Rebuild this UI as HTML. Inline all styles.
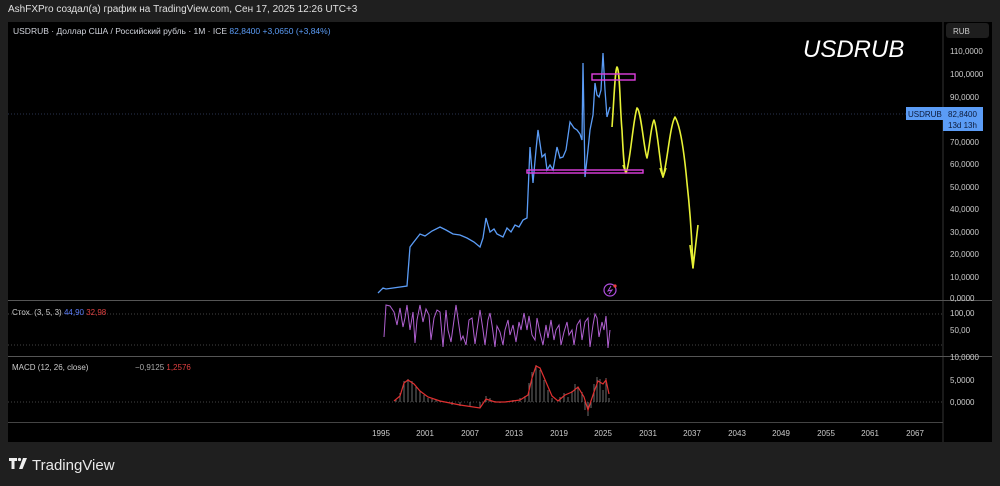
<!DOCTYPE html>
<html><head><meta charset="utf-8"><style>
body{margin:0;width:1000px;height:486px;background:#1f1f1f;font-family:"Liberation Sans","DejaVu Sans",sans-serif;position:relative;overflow:hidden;color:#d1d4dc}
.t{position:absolute;white-space:nowrap}
</style></head><body>
<div class="t" style="left:8px;top:4px;font-size:10px;color:#e0e0e0">AshFXPro создал(а) график на TradingView.com, Сен 17, 2025 12:26 UTC+3</div>
<svg style="position:absolute;left:0;top:0" width="1000" height="486" font-family="Liberation Sans, DejaVu Sans, sans-serif">
<rect x="8" y="22" width="984" height="420" fill="#000"/>
<line x1="943" y1="22" x2="943" y2="442" stroke="#333"/>
<line x1="8" y1="300.5" x2="992" y2="300.5" stroke="#555"/>
<line x1="8" y1="356.5" x2="992" y2="356.5" stroke="#555"/>
<line x1="8" y1="422.5" x2="943" y2="422.5" stroke="#444"/>
<line x1="8" y1="114" x2="943" y2="114" stroke="#2a3550" stroke-dasharray="1,2"/>
<line x1="8" y1="314" x2="943" y2="314" stroke="#444" stroke-dasharray="1,2"/>
<line x1="8" y1="345" x2="943" y2="345" stroke="#444" stroke-dasharray="1,2"/>
<line x1="8" y1="402" x2="943" y2="402" stroke="#444" stroke-dasharray="1,2"/>
<text x="13" y="34" font-size="8.5" fill="#d1d4dc">USDRUB · Доллар США / Российский рубль · 1M · ICE <tspan fill="#5b9cf6">82,8400  +3,0650 (+3,84%)</tspan></text>
<text x="803" y="57" font-size="24" font-style="italic" fill="#fff">USDRUB</text>
<rect x="946" y="23" width="43" height="15" rx="3" fill="#1e1e1e"/>
<text x="953" y="34" font-size="8" fill="#ccc">RUB</text>
<g font-size="8" fill="#ccc">
<text x="950" y="54">110,0000</text><text x="950" y="77">100,0000</text><text x="950" y="100">90,0000</text>
<text x="950" y="145">70,0000</text><text x="950" y="167">60,0000</text><text x="950" y="190">50,0000</text>
<text x="950" y="212">40,0000</text><text x="950" y="235">30,0000</text><text x="950" y="257">20,0000</text>
<text x="950" y="280">10,0000</text><text x="950" y="301">0,0000</text>
<text x="950" y="333">50,00</text><text x="950" y="316">100,00</text>
<text x="950" y="360">10,0000</text><text x="950" y="383">5,0000</text><text x="950" y="405">0,0000</text>
</g>
<rect x="906" y="107" width="37" height="13" fill="#5b9cf6"/>
<text x="908" y="117" font-size="8" fill="#0c1a3a">USDRUB</text>
<rect x="943" y="107" width="40" height="24" fill="#5b9cf6"/>
<text x="948" y="117" font-size="8" fill="#0c1a3a">82,8400</text>
<text x="948" y="128" font-size="8" fill="#0c1a3a">13d 13h</text>
<text x="12" y="315" font-size="8" fill="#ccc">Стох. (3, 5, 3) <tspan fill="#5b7cf6">44,90</tspan> <tspan fill="#e04040">32,98</tspan></text>
<text x="12" y="370" font-size="8" fill="#ccc">MACD (12, 26, close)</text>
<text x="135" y="370" font-size="8" fill="#aaa">−0,9125 <tspan fill="#e04040">1,2576</tspan></text>
<g font-size="8" fill="#ccc" text-anchor="middle">
<text x="381" y="436">1995</text><text x="425" y="436">2001</text><text x="470" y="436">2007</text><text x="514" y="436">2013</text><text x="559" y="436">2019</text><text x="603" y="436">2025</text><text x="648" y="436">2031</text><text x="692" y="436">2037</text><text x="737" y="436">2043</text><text x="781" y="436">2049</text><text x="826" y="436">2055</text><text x="870" y="436">2061</text><text x="915" y="436">2067</text>
</g>
<polyline fill="none" stroke="#5b9cf6" stroke-width="1.3" points="378,293 383,288 386,289 407,286 410,247 413,243 420,234 425,236 432,231 440,227 446,230 453,234 460,235 467,238 474,242 480,247 483,238 486,218 490,232 494,229 497,234 503,237 507,228 511,232 515,225 519,227 523,220 527,218 530,147 533,183 536,150 538,130 542,157 545,154 547,170 550,165 553,170 557,147 560,158 563,157 566,150 570,122 574,128 577,130 580,134 582,140 583,63 585,177 588,150 590,130 593,115 595,83 597,95 599,97 601,90 603,53 605,90 607,117 609,110 610,107"/>
<g fill="none" stroke="#e8f236" stroke-width="1.6" stroke-linejoin="round">
<path d="M612,127 C614,100 615,70 617,67 C620,70 620,110 622,130 C623,150 624,170 626,173 C630,165 633,120 637,108 C641,110 644,150 647,158 C650,145 651,125 654,120 C657,125 660,165 663,177 C667,165 670,125 675,117 C680,125 684,150 687,183 C690,210 692,240 693,268 L698,225"/>
<path d="M690,245 L693,268"/><path d="M660,168 L663,177 L666,168"/><path d="M623,165 L626,173"/>
</g>
<rect x="592" y="74" width="43" height="6" fill="none" stroke="#e040e0" stroke-width="1.4"/>
<rect x="527" y="170" width="116" height="3" fill="none" stroke="#e040e0" stroke-width="1.4"/>
<circle cx="610" cy="290" r="6" fill="none" stroke="#b050e0" stroke-width="1.2"/>
<path d="M611,286 L608,291 L612,290 L609,294" fill="none" stroke="#b050e0"/>
<circle cx="615" cy="286" r="1.6" fill="#f04040"/>
<polyline fill="none" stroke="#b060d0" stroke-width="1" points="384,337 386,305 390,306 394,312 397,325 400,308 403,327 405,318 407,305 410,330 413,312 415,343 417,320 420,305 423,322 426,309 429,315 431,340 434,318 437,310 440,312 443,347 446,310 448,330 451,342 454,320 456,305 459,326 461,340 463,336 466,345 469,320 472,318 475,344 477,330 480,310 483,330 485,345 488,320 490,313 492,325 495,347 497,326 500,332 503,345 505,330 508,320 510,335 513,325 516,342 519,322 521,330 524,313 527,330 529,316 532,335 535,340 537,318 540,333 543,345 546,325 548,338 551,320 554,340 556,330 559,325 561,345 564,332 567,322 569,335 572,330 574,345 577,325 580,320 582,340 585,322 588,318 590,347 593,325 595,314 597,318 599,337 602,322 604,330 606,316 608,348 610,330"/>
<g stroke="#888" stroke-width="0.8">
<path d="M396,402V400M400,402V393M404,402V381M408,402V379M412,402V381M416,402V387M420,402V391M424,402V395M428,402V398M432,402V399M436,402V400M440,402V401M452,402V405M460,402V406M470,402V407M480,402V408M486,402V396M490,402V398M495,402V401M500,402V403M507,402V401M513,402V400M520,402V398M525,402V396M529,402V383M532,402V372M536,402V365M540,402V370M544,402V380M548,402V390M552,402V398M556,402V402M560,402V397M564,402V393M568,402V397M572,402V391M575,402V384M578,402V388M582,402V392M585,402V410M588,402V416M591,402V408M594,402V384M597,402V377M600,402V379M603,402V390M606,402V378M609,402V398"/>
</g>
<polyline fill="none" stroke="#e03030" stroke-width="1.2" points="394,401 400,396 404,383 408,380 414,384 420,391 428,397 440,401 460,405 480,408 486,399 495,402 505,402 520,400 528,395 532,378 536,366 540,368 546,382 552,396 558,401 565,395 572,392 578,387 584,397 588,410 594,392 598,381 603,384 606,380 609,394"/>
<path d="M9,458h8v3h-2.5v8h-3v-8h-2.5z" fill="#eee"/><circle cx="19.5" cy="459.5" r="1.6" fill="#eee"/><path d="M23,458h4l-4.5,11h-3.5z" fill="#eee"/>
<text x="32" y="470" font-size="15" fill="#e8e8e8">TradingView</text>
</svg>
</body></html>
